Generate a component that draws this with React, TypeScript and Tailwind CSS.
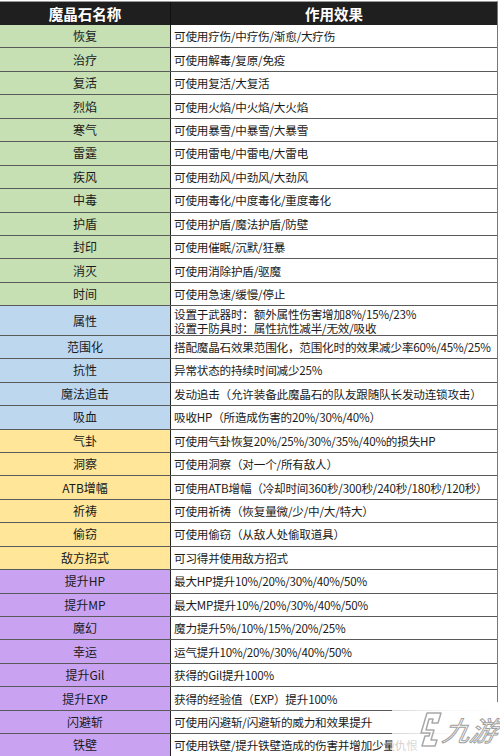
import React from 'react';

type Row = { name: string; effect: string[]; tone: 'green' | 'blue' | 'yellow' | 'purple'; tall?: boolean };

const TONES: Record<Row['tone'], string> = {
  green: 'bg-[#c6e0b4]',
  blue: 'bg-[#bdd7ee]',
  yellow: 'bg-[#ffe699]',
  purple: 'bg-[#c9a3f1]',
};

const ROWS: Row[] = [
  { name: '恢复', effect: ['可使用疗伤/中疗伤/渐愈/大疗伤'], tone: 'green' },
  { name: '治疗', effect: ['可使用解毒/复原/免疫'], tone: 'green' },
  { name: '复活', effect: ['可使用复活/大复活'], tone: 'green' },
  { name: '烈焰', effect: ['可使用火焰/中火焰/大火焰'], tone: 'green' },
  { name: '寒气', effect: ['可使用暴雪/中暴雪/大暴雪'], tone: 'green' },
  { name: '雷霆', effect: ['可使用雷电/中雷电/大雷电'], tone: 'green' },
  { name: '疾风', effect: ['可使用劲风/中劲风/大劲风'], tone: 'green' },
  { name: '中毒', effect: ['可使用毒化/中度毒化/重度毒化'], tone: 'green' },
  { name: '护盾', effect: ['可使用护盾/魔法护盾/防壁'], tone: 'green' },
  { name: '封印', effect: ['可使用催眠/沉默/狂暴'], tone: 'green' },
  { name: '消灭', effect: ['可使用消除护盾/驱魔'], tone: 'green' },
  { name: '时间', effect: ['可使用急速/缓慢/停止'], tone: 'green' },
  {
    name: '属性',
    effect: ['设置于武器时：额外属性伤害增加8%/15%/23%', '设置于防具时：属性抗性减半/无效/吸收'],
    tone: 'blue',
    tall: true,
  },
  { name: '范围化', effect: ['搭配魔晶石效果范围化，范围化时的效果减少率60%/45%/25%'], tone: 'blue' },
  { name: '抗性', effect: ['异常状态的持续时间减少25%'], tone: 'blue' },
  { name: '魔法追击', effect: ['发动追击（允许装备此魔晶石的队友跟随队长发动连锁攻击）'], tone: 'blue' },
  { name: '吸血', effect: ['吸收HP（所造成伤害的20%/30%/40%）'], tone: 'blue' },
  { name: '气卦', effect: ['可使用气卦恢复20%/25%/30%/35%/40%的损失HP'], tone: 'yellow' },
  { name: '洞察', effect: ['可使用洞察（对一个/所有敌人）'], tone: 'yellow' },
  { name: 'ATB增幅', effect: ['可使用ATB增幅（冷却时间360秒/300秒/240秒/180秒/120秒）'], tone: 'yellow' },
  { name: '祈祷', effect: ['可使用祈祷（恢复量微/少/中/大/特大）'], tone: 'yellow' },
  { name: '偷窃', effect: ['可使用偷窃（从敌人处偷取道具）'], tone: 'yellow' },
  { name: '敌方招式', effect: ['可习得并使用敌方招式'], tone: 'yellow' },
  { name: '提升HP', effect: ['最大HP提升10%/20%/30%/40%/50%'], tone: 'purple' },
  { name: '提升MP', effect: ['最大MP提升10%/20%/30%/40%/50%'], tone: 'purple' },
  { name: '魔幻', effect: ['魔力提升5%/10%/15%/20%/25%'], tone: 'purple' },
  { name: '幸运', effect: ['运气提升10%/20%/30%/40%/50%'], tone: 'purple' },
  { name: '提升Gil', effect: ['获得的Gil提升100%'], tone: 'purple' },
  { name: '提升EXP', effect: ['获得的经验值（EXP）提升100%'], tone: 'purple' },
  { name: '闪避斩', effect: ['可使用闪避斩/闪避斩的威力和效果提升'], tone: 'purple' },
  { name: '铁壁', effect: ['可使用铁壁/提升铁壁造成的伤害并增加少量仇恨'], tone: 'purple' },
];

const FONT = "font-['Noto_Sans_CJK_SC','Noto_Sans',sans-serif]";

function Watermark() {
  return (
    <div className="absolute right-0 bottom-0 w-[108px] h-[54px] bg-gradient-to-r from-white/75 via-white/95 to-white flex items-center gap-[1px] pl-[25px]">
      <svg width="26" height="38" viewBox="0 0 26 38" fill="none">
        <path
          d="M10 3 L24 3 L21 13 L15 13 L16 9 L12 9 L9 20 L17 20 L14 30 L20 30 L18 36 L5 36 L8 26 L12 26 L13 23 L4 23 Z"
          stroke="#a8a8a8"
          strokeWidth="1.5"
          strokeLinejoin="round"
          fill="white"
        />
      </svg>
      <span className="text-[27px] italic leading-none text-white [-webkit-text-stroke:1px_#a0a0a0] font-['Noto_Sans_CJK_SC',sans-serif] -skew-x-12">
        九游
      </span>
    </div>
  );
}

export default function App() {
  return (
    <div className={`relative w-[500px] h-[756px] overflow-hidden bg-white pt-[1px] ${FONT}`}>
      <div className="w-[498px] border-t border-r border-t-[#9a9a9a] border-r-[#777]">
        <div className="flex h-[23px] bg-[#1f1f1f] text-white font-bold text-[14.5px]">
          <div className="w-[171px] flex items-center justify-center border-r border-[#111]">魔晶石名称</div>
          <div className="flex-1 flex items-center justify-center">作用效果</div>
        </div>
        {ROWS.map((row) => (
          <div
            key={row.name}
            className={`flex border-b border-[#5a5a5a] ${row.tall ? 'h-[29.5px]' : 'h-[23.45px]'}`}
          >
            <div
              className={`w-[171px] shrink-0 flex items-center justify-center border-r border-[#222] text-[12px] text-[#1a1a1a] ${TONES[row.tone]}`}
            >
              {row.name}
            </div>
            <div className="flex-1 min-w-0 flex flex-col justify-center pl-[3px] text-[11.6px] leading-[14px] tracking-[-0.2px] text-[#1a1a1a] whitespace-nowrap">
              {row.effect.map((line) => (
                <div key={line}>{line}</div>
              ))}
            </div>
          </div>
        ))}
      </div>
      <Watermark />
    </div>
  );
}
